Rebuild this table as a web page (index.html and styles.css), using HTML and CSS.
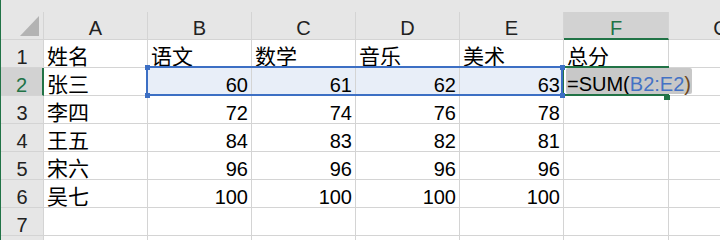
FILE: index.html
```html
<!DOCTYPE html>
<html lang="zh-CN">
<head>
<meta charset="utf-8">
<title>成绩表</title>
<link rel="stylesheet" href="styles.css">
</head>
<body>
<div class="sheet">
  <div class="strip"></div>
  <div class="grid">
    <div class="corner"><span class="tri"></span></div>
    <div class="ch">A</div>
    <div class="ch">B</div>
    <div class="ch">C</div>
    <div class="ch">D</div>
    <div class="ch">E</div>
    <div class="ch sel">F</div>
    <div class="ch">G</div>

    <div class="rh">1</div>
    <div class="c t">姓名</div>
    <div class="c t">语文</div>
    <div class="c t">数学</div>
    <div class="c t">音乐</div>
    <div class="c t">美术</div>
    <div class="c t">总分</div>
    <div class="c"></div>

    <div class="rh sel">2</div>
    <div class="c t">张三</div>
    <div class="c n ref">60</div>
    <div class="c n ref">61</div>
    <div class="c n ref">62</div>
    <div class="c n ref">63</div>
    <div class="c edit"><span class="entry">=SUM(<span class="rng">B2:E2</span><span class="par">)</span></span></div>
    <div class="c"></div>

    <div class="rh">3</div>
    <div class="c t">李四</div>
    <div class="c n">72</div>
    <div class="c n">74</div>
    <div class="c n">76</div>
    <div class="c n">78</div>
    <div class="c"></div>
    <div class="c"></div>

    <div class="rh">4</div>
    <div class="c t">王五</div>
    <div class="c n">84</div>
    <div class="c n">83</div>
    <div class="c n">82</div>
    <div class="c n">81</div>
    <div class="c"></div>
    <div class="c"></div>

    <div class="rh">5</div>
    <div class="c t">宋六</div>
    <div class="c n">96</div>
    <div class="c n">96</div>
    <div class="c n">96</div>
    <div class="c n">96</div>
    <div class="c"></div>
    <div class="c"></div>

    <div class="rh">6</div>
    <div class="c t">吴七</div>
    <div class="c n">100</div>
    <div class="c n">100</div>
    <div class="c n">100</div>
    <div class="c n">100</div>
    <div class="c"></div>
    <div class="c"></div>

    <div class="rh">7</div>
    <div class="c"></div>
    <div class="c"></div>
    <div class="c"></div>
    <div class="c"></div>
    <div class="c"></div>
    <div class="c"></div>
    <div class="c"></div>

    <div class="rh"></div>
    <div class="c"></div>
    <div class="c"></div>
    <div class="c"></div>
    <div class="c"></div>
    <div class="c"></div>
    <div class="c"></div>
    <div class="c"></div>
  </div>

  <!-- range referenced by the formula being edited -->
  <div class="refbox">
    <i class="h tl"></i><i class="h tr"></i><i class="h bl"></i><i class="h br"></i>
  </div>
  <!-- active cell in edit mode -->
  <div class="active"><i class="fill"></i></div>
</div>
</body>
</html>
```

FILE: styles.css
```css
body {
  margin: 0;
  background: #fff;
  font-family: "Liberation Sans", "Noto Sans CJK SC", sans-serif;
  font-size: 20px;
  color: #000;
  overflow: hidden;
}

.sheet {
  position: relative;
  width: 719px;
  height: 240px;
  border-left: 1px solid #217346;
  overflow: hidden;
}

.strip {
  height: 12px;
  background: #e6e6e6;
}

.grid {
  display: grid;
  grid-template-columns: 43px repeat(5, 104px) 105px 105px;
  grid-auto-rows: 28px;
}

.grid > div {
  box-sizing: border-box;
  display: flex;
  align-items: flex-end;
  line-height: 20px;
  white-space: nowrap;
  min-width: 0;
  border-right: 1px solid #d4d4d4;
  border-bottom: 1px solid #d4d4d4;
}

/* headers */
.corner,
.ch,
.rh {
  background: #e6e6e6;
  color: #222;
  justify-content: center;
  border-color: #c8c8c8;
}

.ch {
  padding-bottom: 1px;
  border-bottom-color: #ababab;
}

.corner {
  position: relative;
  border-bottom-color: #ababab;
  border-right-color: #ababab;
}

.rh {
  border-right-color: #ababab;
}

.tri {
  position: absolute;
  right: 4px;
  bottom: 3px;
  width: 0;
  height: 0;
  border-left: 19px solid transparent;
  border-bottom: 20px solid #b3b3b3;
}

.ch.sel,
.rh.sel {
  background: #d2d2d2;
  color: #217346;
}

.ch.sel {
  border-bottom: 2px solid #217346;
  padding-bottom: 0;
}

.rh.sel {
  border-right: 2px solid #217346;
}

/* cells */
.t {
  padding-left: 3px;
  font-size: 21px;
}

.n {
  justify-content: flex-end;
  padding-right: 3px;
}

.ref {
  background: #e8eef8;
}

.grid > .edit {
  align-items: flex-start;
  padding-left: 2px;
  overflow: visible;
}

.entry {
  position: relative;
  z-index: 1;
  display: flex;
  align-items: flex-end;
  height: 26px;
  padding: 0 1px;
  background: #c8c8c8;
  border-radius: 2px;
}

.rng {
  color: #4472c4;
}

.par {
  color: #6e4720;
}

/* overlays */
.refbox {
  position: absolute;
  left: 145px;
  top: 66px;
  width: 417px;
  height: 30px;
  box-sizing: border-box;
  border: 2px solid #3c6fc4;
  z-index: 3;
}

.h {
  position: absolute;
  width: 5px;
  height: 5px;
  background: #3c6fc4;
}

.h.tl { left: -3px; top: -3px; }
.h.bl { left: -3px; bottom: -4px; }
.h.tr { right: -4px; top: -3px; }
.h.br { right: -4px; bottom: -4px; }

.active {
  position: absolute;
  left: 561px;
  top: 66px;
  width: 107px;
  height: 30px;
  box-sizing: border-box;
  border-top: 2px solid #217346;
  border-bottom: 2px solid #217346;
  border-left: 2px solid #217346;
  z-index: 2;
}

.fill {
  position: absolute;
  right: -1px;
  bottom: -6px;
  width: 6px;
  height: 5px;
  background: #217346;
}
```
